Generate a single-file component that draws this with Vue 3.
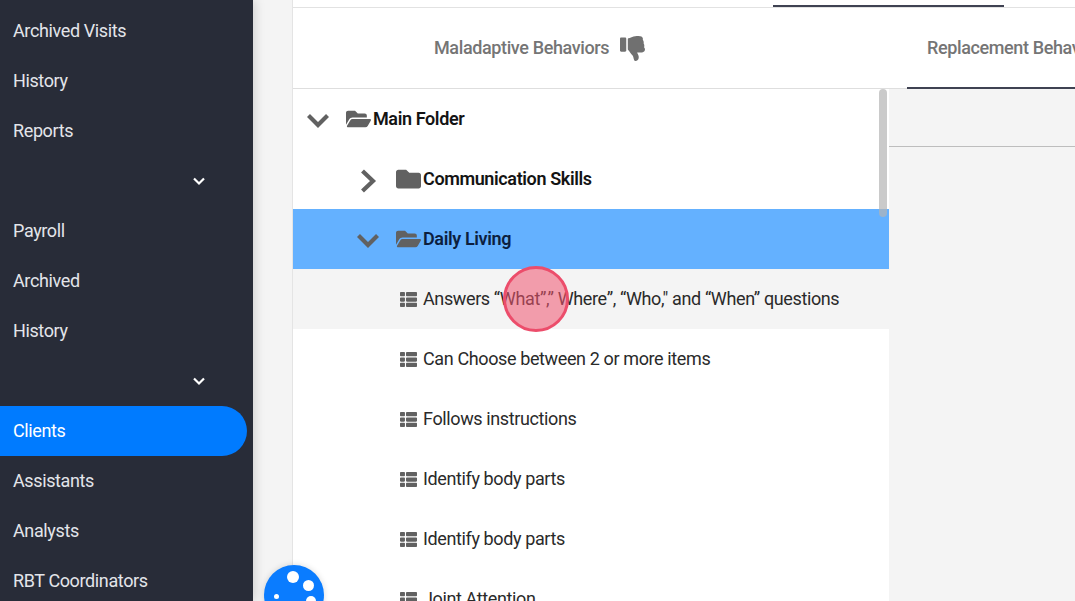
<template>
  <div class="app">
    <aside class="sidebar">
      <template v-for="(item, i) in menu" :key="i">
        <div v-if="item.toggle" class="menu-item toggle">
          <svg width="14" height="10" viewBox="0 0 14 10"><path d="M2 2.5 7 7.5 12 2.5" fill="none" stroke="#fff" stroke-width="2.2" /></svg>
        </div>
        <div v-else class="menu-item" :class="{ active: item.active }">{{ item.label }}</div>
      </template>
    </aside>

    <main class="content">
      <div class="panel-head">
        <div class="top-strip"><span class="top-bar"></span></div>
        <div class="tabs">
          <div class="tab first">
            <span class="tab-label">Maladaptive Behaviors</span>
            <svg class="thumb" width="25" height="25" viewBox="0 0 512 512"><path fill="#707070" d="M0 56v240c0 13.255 10.745 24 24 24h80c13.255 0 24-10.745 24-24V56c0-13.255-10.745-24-24-24H24C10.745 32 0 42.745 0 56zM312 512c-20.183 0-29.485-39.293-33.931-57.795-5.206-21.666-10.589-44.07-25.393-58.902-32.469-32.524-49.503-73.967-89.117-113.111a11.98 11.98 0 0 1-3.558-8.521V59.901c0-6.541 5.243-11.878 11.783-11.998 15.831-.29 36.694-9.079 52.651-16.178C256.189 17.598 295.709.017 343.995 0h2.844c42.777 0 93.363.413 113.774 29.737 8.392 12.057 10.446 27.034 6.148 44.632 16.312 17.053 25.063 48.863 16.382 74.757 17.544 23.432 19.143 56.132 9.308 79.469l.11.11c11.893 11.949 19.523 31.259 19.439 49.197-.156 30.352-26.157 58.098-59.553 58.098H350.723C358.03 364.34 384 388.132 384 430.548 384 504 336 512 312 512z" /></svg>
          </div>
          <div class="tab second">Replacement Behaviors</div>
        </div>
      </div>

      <div class="body">
        <div class="tree">
          <div class="scrollbar"></div>
          <div
            v-for="(row, i) in rows"
            :key="i"
            class="row"
            :class="['level' + row.level, row.state, { bold: row.type !== 'list' }]"
          >
            <span v-if="row.type === 'open'" class="caret down">
              <svg width="26" height="16" viewBox="0 0 26 16"><path d="M3.5 2.5 13 12 22.5 2.5" fill="none" stroke="#616161" stroke-width="4.2" /></svg>
            </span>
            <span v-else-if="row.type === 'closed'" class="caret">
              <svg width="18" height="24" viewBox="0 0 18 24"><path d="M3.5 2 14 12 3.5 22" fill="none" stroke="#616161" stroke-width="4.2" /></svg>
            </span>
            <svg v-if="row.type === 'open'" class="folder" width="25" height="26" viewBox="0 0 576 512"><path fill="#616161" d="M572.694 292.093L500.27 416.248A63.997 63.997 0 0 1 444.989 448H45.025c-18.523 0-30.064-20.093-20.731-36.093l72.424-124.155A64 64 0 0 1 152 256h399.964c18.523 0 30.064 20.093 20.73 36.093zM152 224h328v-48c0-26.51-21.49-48-48-48H272l-64-64H48C21.49 64 0 85.49 0 112v278.046l69.077-118.418C86.214 242.25 118.5 224 152 224z" /></svg>
            <svg v-else-if="row.type === 'closed'" class="folder" width="25" height="26" viewBox="0 0 512 512"><path fill="#616161" d="M464 128H272l-64-64H48C21.49 64 0 85.49 0 112v288c0 26.51 21.49 48 48 48h416c26.51 0 48-21.49 48-48V176c0-26.51-21.49-48-48-48z" /></svg>
            <svg v-else class="list-icon" width="17" height="17" viewBox="0 0 512 512"><path fill="#616161" d="M149.333 216v80c0 13.255-10.745 24-24 24H24c-13.255 0-24-10.745-24-24v-80c0-13.255 10.745-24 24-24h101.333c13.255 0 24 10.745 24 24zM0 376v80c0 13.255 10.745 24 24 24h101.333c13.255 0 24-10.745 24-24v-80c0-13.255-10.745-24-24-24H24c-13.255 0-24 10.745-24 24zM125.333 32H24C10.745 32 0 42.745 0 56v80c0 13.255 10.745 24 24 24h101.333c13.255 0 24-10.745 24-24V56c0-13.255-10.745-24-24-24zm80 448H488c13.255 0 24-10.745 24-24v-80c0-13.255-10.745-24-24-24H205.333c-13.255 0-24 10.745-24 24v80c0 13.255 10.745 24 24 24zm-24-424v80c0 13.255 10.745 24 24 24H488c13.255 0 24-10.745 24-24V56c0-13.255-10.745-24-24-24H205.333c-13.255 0-24 10.745-24 24zm24 264H488c13.255 0 24-10.745 24-24v-80c0-13.255-10.745-24-24-24H205.333c-13.255 0-24 10.745-24 24v80c0 13.255 10.745 24 24 24z" /></svg>
            <span class="label">{{ row.label }}</span>
          </div>
        </div>
        <div class="detail"><div class="detail-head"></div></div>
      </div>
    </main>

    <div class="click-marker"></div>

    <div class="fab">
      <i class="dot d1"></i><i class="dot d2"></i><i class="dot d3"></i><i class="dot d4"></i>
    </div>
  </div>
</template>

<script setup>
const menu = [
  { label: 'Archived Visits' },
  { label: 'History' },
  { label: 'Reports' },
  { toggle: true },
  { label: 'Payroll' },
  { label: 'Archived' },
  { label: 'History' },
  { toggle: true },
  { label: 'Clients', active: true },
  { label: 'Assistants' },
  { label: 'Analysts' },
  { label: 'RBT Coordinators' },
]

const rows = [
  { label: 'Main Folder', type: 'open', level: 0 },
  { label: 'Communication Skills', type: 'closed', level: 1 },
  { label: 'Daily Living', type: 'open', level: 1, state: 'selected' },
  { label: 'Answers “What”,” Where”, “Who," and “When” questions', type: 'list', level: 2, state: 'hover' },
  { label: 'Can Choose between 2 or more items', type: 'list', level: 2 },
  { label: 'Follows instructions', type: 'list', level: 2 },
  { label: 'Identify body parts', type: 'list', level: 2 },
  { label: 'Identify body parts', type: 'list', level: 2 },
  { label: 'Joint Attention', type: 'list', level: 2 },
]
</script>

<style>
html, body { margin: 0; overflow: hidden; }
</style>

<style scoped>
.app {
  position: relative;
  display: flex;
  height: 601px;
  overflow: hidden;
  font-family: Roboto, "Liberation Sans", sans-serif;
  font-size: 18px;
  letter-spacing: -0.38px;
  background: #f4f4f4;
}

.sidebar {
  flex: 0 0 253px;
  padding: 6px 6px 0 0;
  box-sizing: border-box;
  background: #282c38;
  box-shadow: 2px 0 10px rgba(0, 0, 0, 0.15);
  z-index: 1;
}
.menu-item {
  height: 50px;
  box-sizing: border-box;
  display: flex;
  align-items: center;
  padding: 0 0 2px 13px;
  color: #e3e5ea;
  border-radius: 0 25px 25px 0;
}
.menu-item.toggle { justify-content: flex-end; padding: 0 41px 0 0; }
.menu-item.active { background: #007bff; color: #fff; }

.content {
  flex: 1;
  min-width: 0;
  margin-left: 39px;
  display: flex;
  flex-direction: column;
  background: #fff;
  border-left: 1px solid #e4e4e4;
}

.top-strip {
  height: 7px;
  border-bottom: 1px solid #e2e2e2;
  display: flex;
  align-items: flex-end;
  padding-left: 480px;
}
.top-bar { width: 231px; height: 2px; background: #3f4252; }

.tabs {
  height: 80px;
  display: flex;
  border-bottom: 1px solid #dedede;
  font-weight: 500;
  color: #757575;
}
.tab { display: flex; align-items: center; height: 80px; box-sizing: border-box; flex-shrink: 0; white-space: nowrap; }
.tab.first { width: 614px; padding-left: 141px; gap: 11px; }
.tab.second { width: 300px; padding-left: 20px; border-bottom: 2px solid #3f4252; height: 81px; }
.tab-label { margin-bottom: 2px; }

.body { flex: 1; min-height: 0; display: flex; }

.tree { position: relative; flex: 0 0 596px; overflow: hidden; background: #fff; }
.scrollbar {
  position: absolute;
  top: 0;
  right: 2px;
  width: 8px;
  height: 128px;
  border-radius: 4px;
  background: rgba(180, 180, 180, 0.7);
  z-index: 2;
}
.row {
  position: relative;
  height: 60px;
  display: flex;
  align-items: center;
  color: #2a2a2a;
  white-space: nowrap;
}
.row.bold { font-weight: 600; color: #141414; }
.row.selected { background: #64b1ff; color: #0c1f3f; }
.row.hover { background: #f4f4f4; }
.label { margin-bottom: 2px; }
.level0 { padding-left: 52px; }
.level1 { padding-left: 103px; }
.level2 { padding-left: 107px; }
.caret { position: absolute; top: 20px; display: flex; justify-content: center; width: 26px; }
.caret.down { top: 24px; }
.level0 .caret { left: 12px; }
.level1 .caret { left: 62px; }
.folder { margin-right: 2px; }
.level0 .folder { margin-left: 1px; }
.list-icon { margin-right: 6px; }

.detail { flex: 1; background: #f4f4f4; }
.detail-head { height: 57px; border-bottom: 1px solid #bdbdbd; }

.click-marker {
  position: absolute;
  left: 503px;
  top: 266px;
  width: 66px;
  height: 66px;
  box-sizing: border-box;
  border-radius: 50%;
  border: 3px solid #ec4d6b;
  background: rgba(241, 84, 112, 0.55);
  z-index: 3;
}

.fab {
  position: absolute;
  left: 264px;
  top: 565px;
  width: 60px;
  height: 60px;
  border-radius: 50%;
  background: #0a7cff;
  box-shadow: 0 0 6px rgba(0, 0, 0, 0.15);
  z-index: 3;
}
.dot { position: absolute; border-radius: 50%; background: #fff; }
.d1 { left: 23px; top: 6px; width: 12px; height: 12px; }
.d2 { left: 39px; top: 15px; width: 11px; height: 11px; }
.d3 { left: 10px; top: 29px; width: 5px; height: 5px; }
.d4 { left: 42px; top: 31px; width: 10px; height: 10px; }
</style>
